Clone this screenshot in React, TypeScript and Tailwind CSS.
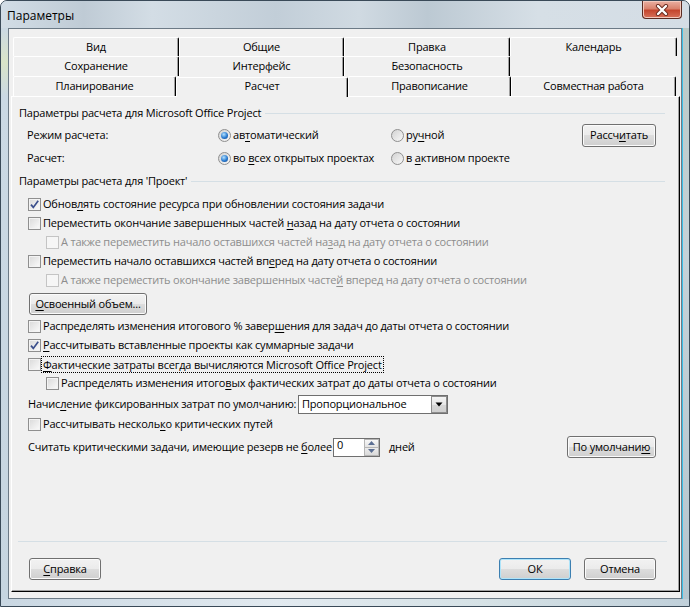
import React from "react";
import clsx from "clsx";

function U({ children }: { children: React.ReactNode }) {
  return <span className="underline decoration-1 underline-offset-[2px]">{children}</span>;
}

function Box({ checked, disabled }: { checked?: boolean; disabled?: boolean }) {
  return (
    <span
      className={clsx(
        "w-[13px] h-[13px] border flex items-center justify-center shrink-0",
        disabled
          ? "border-[#c4c4c4] bg-[#f6f6f6]"
          : "border-[#8f8f8f] bg-[linear-gradient(135deg,#d9d9d9,#fbfbfb)] shadow-[inset_0_0_0_1px_#f3f3f3]"
      )}
    >
      {checked && (
        <svg width="11" height="11" viewBox="0 0 11 11">
          <path d="M2 5.6 L4.3 8.4 L9.2 1.8" fill="none" stroke="#3b4f8c" strokeWidth="1.7" />
        </svg>
      )}
    </span>
  );
}

function Radio({ checked }: { checked?: boolean }) {
  return (
    <span className="w-[13px] h-[13px] rounded-full border border-[#8f8f8f] bg-[linear-gradient(135deg,#d2d2d2,#f8f8f8)] flex items-center justify-center shrink-0">
      {checked && (
        <span className="w-[7px] h-[7px] rounded-full bg-[radial-gradient(circle_at_40%_35%,#b4e2ff,#2a7bd0_55%,#0c3d84)]" />
      )}
    </span>
  );
}

function Btn({
  children,
  className,
  def,
}: {
  children: React.ReactNode;
  className?: string;
  def?: boolean;
}) {
  return (
    <button
      className={clsx(
        "h-[22px] shrink-0 rounded-[3px] border flex items-center justify-center text-[11px] text-black bg-[linear-gradient(#f2f2f2_0%,#ebebeb_49%,#dddddd_50%,#cfcfcf_100%)]",
        def
          ? "border-[#3c7fb1] shadow-[inset_0_0_0_1px_#aee4fa]"
          : "border-[#707070] shadow-[inset_0_0_0_1px_#fbfbfb]",
        className
      )}
    >
      {children}
    </button>
  );
}

function Group({ title }: { title: string }) {
  return (
    <div className="h-[16px] flex items-center pl-[7px] pr-[14px]">
      <span>{title}</span>
      <span className="flex-1 h-px bg-[#d5dfe5] ml-[4px]" />
    </div>
  );
}

function CheckRow({
  children,
  checked,
  disabled,
  indent,
  className,
}: {
  children: React.ReactNode;
  checked?: boolean;
  disabled?: boolean;
  indent?: boolean;
  className?: string;
}) {
  return (
    <div
      className={clsx(
        "h-[19px] flex items-center gap-[2px]",
        indent ? "pl-[34px]" : "pl-[16px]",
        disabled && "text-[#8d8d8d]",
        className
      )}
    >
      <Box checked={checked} disabled={disabled} />
      <span>{children}</span>
    </div>
  );
}

const tabCls =
  "h-full flex items-center justify-center border-t border-l border-r border-t-white border-l-white border-r-black rounded-t-[2px] shadow-[inset_-1px_0_0_#a0a0a0]";

function CloseButton() {
  return (
    <div className="w-[40px] h-[18px] rounded-b-[4px] border border-t-0 border-[#5b2b22] bg-[linear-gradient(#eab0a2_0%,#d9826d_45%,#c4462e_55%,#d7715a_100%)] shadow-[inset_0_0_0_1px_#f3c9bd] flex items-center justify-center">
      <svg width="16" height="12" viewBox="0 0 16 12">
        <path d="M4 2 L12 10 M12 2 L4 10" stroke="#6a2b1f" strokeWidth="4.2" strokeLinecap="round" />
        <path d="M4 2 L12 10 M12 2 L4 10" stroke="#ffffff" strokeWidth="2.4" strokeLinecap="round" />
      </svg>
    </div>
  );
}

export default function App() {
  return (
    <div className="w-[690px] h-[607px] flex flex-col rounded-t-[7px] border border-[#3a4a58] bg-[linear-gradient(90deg,#c6d4df,#d4dee6_35%,#cdd8e0_70%,#bccbd5)] overflow-hidden whitespace-nowrap font-['Open_Sans',Arial,sans-serif] text-[11px] tracking-[-0.2px] text-black">
      <div className="h-[27px] flex items-start justify-between pr-[7px] bg-[linear-gradient(90deg,#d2dde6_0%,#bfcbd5_12%,#d3dde5_22%,#c2ced8_40%,#d0dae2_52%,#bcc9d3_62%,#d6dfe6_78%,#d4dde5_100%)]">
        <span className="pl-[6px] pt-[6px] text-[12px] tracking-normal">Параметры</span>
        <CloseButton />
      </div>

      <div className="flex-1 flex">
        <div className="w-[7px] bg-[linear-gradient(#cbd9e4,#d9e4c8_6%,#cbd9e4_12%,#c6d5e0)]" />
        <div className="flex-1 bg-[#f0f0f0] border border-[#6c7a86] flex flex-col pt-[8px] pl-[2px] pr-[1px]">
          {/* tab rows */}
          <div className="flex h-[19px] ml-[2px]">
            <div className={clsx(tabCls, "w-[166px]")}>Вид</div>
            <div className={clsx(tabCls, "w-[165px]")}>Общие</div>
            <div className={clsx(tabCls, "w-[166px]")}>Правка</div>
            <div className={clsx(tabCls, "w-[167px]")}>Календарь</div>
          </div>
          <div className="flex h-[20px] ml-[2px]">
            <div className={clsx(tabCls, "w-[166px]")}>Сохранение</div>
            <div className={clsx(tabCls, "w-[165px]")}>Интерфейс</div>
            <div className={clsx(tabCls, "w-[166px]")}>Безопасность</div>
          </div>
          <div className="flex h-[20px] ml-[2px] items-end">
            <div className={clsx(tabCls, "w-[163px]")}>Планирование</div>
            <div className={clsx(tabCls, "w-[172px] h-[23px] -mb-[1px] relative z-10 bg-[#f0f0f0] pb-[3px]")}>
              Расчет
            </div>
            <div className={clsx(tabCls, "w-[163px]")}>Правописание</div>
            <div className={clsx(tabCls, "w-[165px]")}>Совместная работа</div>
          </div>

          {/* tab page */}
          <div className="h-[496px] flex flex-col border-l border-t border-white border-r border-b border-r-black border-b-black shadow-[inset_-1px_-1px_0_#a0a0a0]">
            <div className="mt-[8px]">
              <Group title="Параметры расчета для Microsoft Office Project" />
            </div>
            <div className="mt-[3px] h-[23px] flex items-center pl-[15px] pr-[23px]">
              <span className="w-[191px] shrink-0">Режим расчета:</span>
              <span className="w-[173px] shrink-0 flex items-center gap-[2px]">
                <Radio checked />
                <span>
                  ав<U>т</U>оматический
                </span>
              </span>
              <span className="flex items-center gap-[2px]">
                <Radio />
                <span>
                  ру<U>ч</U>ной
                </span>
              </span>
              <Btn className="ml-auto w-[74px] h-[23px]">
                Рассч<U>и</U>тать
              </Btn>
            </div>
            <div className="h-[23px] flex items-center pl-[15px]">
              <span className="w-[191px] shrink-0">Расчет:</span>
              <span className="w-[173px] shrink-0 flex items-center gap-[2px]">
                <Radio checked />
                <span>
                  во <U>в</U>сех открытых проектах
                </span>
              </span>
              <span className="flex items-center gap-[2px]">
                <Radio />
                <span>
                  в <U>а</U>ктивном проекте
                </span>
              </span>
            </div>
            <div className="mt-[3px]">
              <Group title="Параметры расчета для 'Проект'" />
            </div>

            <CheckRow checked className="mt-[6px]">
              Обнов<U>л</U>ять состояние ресурса при обновлении состояния задачи
            </CheckRow>
            <CheckRow>
              Переместить окончание завершенных частей <U>н</U>азад на дату отчета о состоянии
            </CheckRow>
            <CheckRow indent disabled>
              А также переместить начало оставшихся частей на<U>з</U>ад на дату отчета о состоянии
            </CheckRow>
            <CheckRow>
              Переместить начало оставшихся частей вп<U>е</U>ред на дату отчета о состоянии
            </CheckRow>
            <CheckRow indent disabled>
              А также переместить окончание завершенных часте<U>й</U> вперед на дату отчета о состоянии
            </CheckRow>
            <div className="mt-[3px] pl-[17px]">
              <Btn className="w-[118px]">
                <U>О</U>своенный объем...
              </Btn>
            </div>
            <CheckRow className="mt-[2px]">
              Распределять изменения итогового % завер<U>ш</U>ения для задач до даты отчета о состоянии
            </CheckRow>
            <CheckRow checked>
              <U>Р</U>ассчитывать вставленные проекты как суммарные задачи
            </CheckRow>
            <div className="h-[19px] flex items-center gap-[1px] pl-[16px]">
              <Box />
              <span className="outline-1 outline-dotted outline-black px-[1px] leading-[15px]">
                <U>Ф</U>актические затраты всегда вычисляются Microsoft Office Project
              </span>
            </div>
            <CheckRow indent>
              Распределять изменения итого<U>в</U>ых фактических затрат до даты отчета о состоянии
            </CheckRow>

            <div className="mt-[1px] h-[20px] flex items-center pl-[16px]">
              <span className="w-[270px] shrink-0">
                Начис<U>л</U>ение фиксированных затрат по умолчанию:
              </span>
              <div className="w-[150px] h-[19px] shrink-0 bg-white border border-[#6f6f6f] flex items-center">
                <span className="flex-1 pl-[3px]">Пропорциональное</span>
                <span className="w-[16px] h-[17px] border border-[#8c8c8c] bg-[linear-gradient(#f4f4f4,#e6e6e6_50%,#d6d6d6_51%,#cfcfcf)] flex items-center justify-center">
                  <svg width="8" height="5" viewBox="0 0 8 5">
                    <path d="M0.5 0.5 H7.5 L4 4.5 Z" fill="#000" />
                  </svg>
                </span>
              </div>
            </div>
            <CheckRow className="mt-[1px]">
              Рассчитывать несколь<U>к</U>о критических путей
            </CheckRow>
            <div className="mt-[2px] h-[22px] flex items-center pl-[16px] pr-[23px]">
              <span className="w-[305px] shrink-0">
                Считать критическими задачи, имеющие резерв не <U>б</U>олее
              </span>
              <div className="w-[47px] h-[19px] shrink-0 bg-white border border-[#6f6f6f] flex items-center">
                <span className="flex-1 pl-[3px] -mt-[3px]">0</span>
                <span className="w-[15px] h-[17px] flex flex-col">
                  <span className="flex-1 border border-[#b5b5b5] bg-[linear-gradient(#f7f7f7,#e3e3e3)] flex items-center justify-center">
                    <svg width="7" height="4" viewBox="0 0 7 4">
                      <path d="M0 4 H7 L3.5 0 Z" fill="#5b6f93" />
                    </svg>
                  </span>
                  <span className="flex-1 border border-t-0 border-[#b5b5b5] bg-[linear-gradient(#ececec,#dadada)] flex items-center justify-center">
                    <svg width="7" height="4" viewBox="0 0 7 4">
                      <path d="M0 0 H7 L3.5 4 Z" fill="#5b6f93" />
                    </svg>
                  </span>
                </span>
              </div>
              <span className="ml-[9px]">дней</span>
              <Btn className="ml-auto w-[89px]">
                По умолчани<U>ю</U>
              </Btn>
            </div>

            <div className="mt-auto ml-[6px] mr-[12px] h-px bg-[#d5dfe5]" />
            <div className="mt-[16px] mb-[11px] flex pl-[17px] pr-[23px] gap-[13px]">
              <Btn className="w-[72px]">
                <U>С</U>правка
              </Btn>
              <Btn def className="ml-auto w-[72px]">
                ОК
              </Btn>
              <Btn className="w-[72px]">Отмена</Btn>
            </div>
          </div>
        </div>
        <div className="w-[7px] border-l border-[#3cc0e8] bg-[linear-gradient(#b9c9c6,#c4d2d8_40%,#b5c6cf)]" />
      </div>
      <div className="h-[7px] bg-[linear-gradient(90deg,#c9d7e2,#e2eaf0_40%,#d6e2e6_70%,#c0d0da)]" />
    </div>
  );
}
